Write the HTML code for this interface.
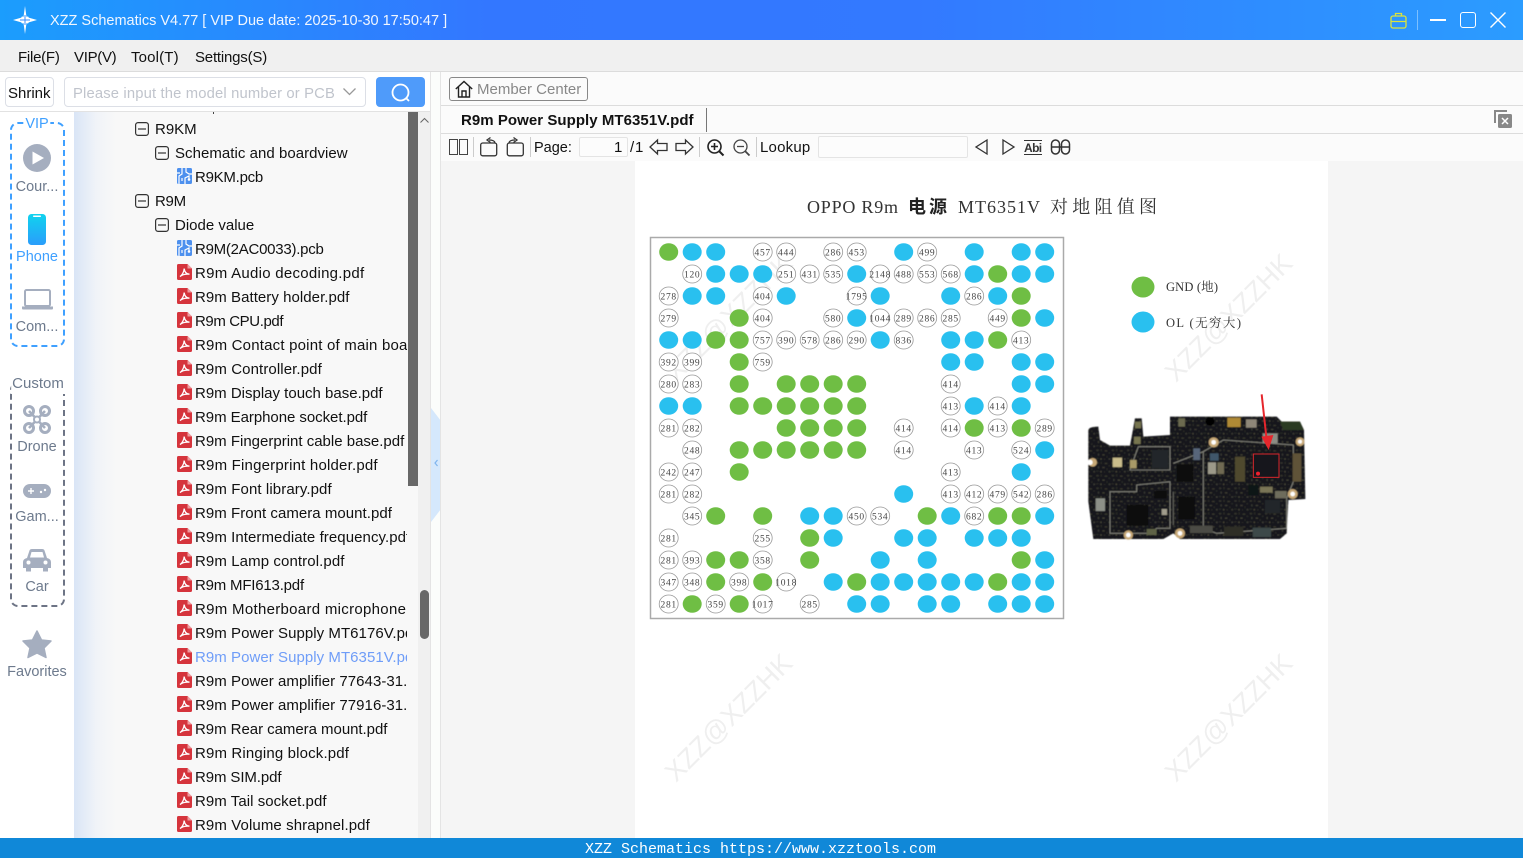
<!DOCTYPE html>
<html lang="en"><head><meta charset="utf-8"><title>XZZ Schematics</title>
<style>
*{box-sizing:border-box}
html,body{margin:0;padding:0;width:1523px;height:858px;overflow:hidden;background:#fff;font-family:"Liberation Sans","Noto Sans CJK SC",sans-serif;font-size:15px;color:#111}
.a{position:absolute}
.t{position:absolute;white-space:nowrap;line-height:20px;height:20px;margin-top:1px}
.c{text-align:center;transform:translateX(-50%)}
.r{color:#6d7a8d;font-size:14.5px}
#tree .t{color:#111}
svg{position:absolute;overflow:visible}
.num{font:9.5px "Liberation Serif",serif;letter-spacing:.7px;fill:#444;text-anchor:middle}
</style></head><body>
<svg width="0" height="0" style="left:0;top:0">
<defs>
<symbol id="pdf" viewBox="0 0 15 16"><path d="M1.5 0H10.5L15 4.5V14.5A1.5 1.5 0 0 1 13.500 16H1.500A1.500 1.500 0 0 1 0 14.500V1.500A1.500 1.500 0 0 1 1.500 0Z" fill="#d5343c"/><path d="M10.500 0L15 4.500H10.500Z" fill="#ef9a9e"/><path d="M3 12.500C5 11.500 7 8 7.200 4.500C7.500 8 9.500 10 12.500 10.200C9.500 10 5.500 10.500 3 12.500Z" fill="none" stroke="#fff" stroke-width="1.300"/></symbol>
<symbol id="pcb" viewBox="0 0 15 16"><rect width="15" height="16" rx="1.500" fill="#4d90ee"/><path d="M5 0V6L2 8V16M9 0V4L12 6H15M0 5H3M8 16V10L12 8V11M5 10V13" fill="none" stroke="#fff" stroke-width="1.200"/><circle cx="12" cy="11.500" r="1.300" fill="#fff"/></symbol>
<symbol id="minus" viewBox="0 0 14 14"><rect x=".6" y=".6" width="12.800" height="12.800" rx="2.500" fill="none" stroke="#333" stroke-width="1.200"/><path d="M3 7H11" stroke="#333" stroke-width="1.200"/></symbol>
</defs></svg>

<!-- title bar -->
<div class="a" style="left:0;top:0;width:1523px;height:40px;background:linear-gradient(90deg,#1b9dfd 0,#3377ff 32%,#3379ff 60%,#2b9cff 100%)"></div>
<svg style="left:13px;top:6px" width="24" height="28" viewBox="0 0 24 28"><path d="M12 0L13.500 11L24 14L13.500 17L12 28L10.500 17L0 14L10.500 11Z" fill="#fff"/><path d="M12 9V19M7 14H17" stroke="#3a8dfb" stroke-width="1"/><circle cx="9.500" cy="11.700" r="1.200" fill="#fff"/><circle cx="14.500" cy="11.700" r="1.200" fill="#fff"/><circle cx="9.500" cy="16.300" r="1.200" fill="#fff"/><circle cx="14.500" cy="16.300" r="1.200" fill="#fff"/></svg>
<div class="t" style="left:50px;top:10px;color:#f0f6ff;font-size:14.500px">XZZ Schematics V4.77 [ VIP Due date: 2025-10-30 17:50:47 ]</div>
<svg style="left:1390px;top:12px" width="17" height="17" viewBox="0 0 17 17" fill="none" stroke="#dbe33c" stroke-width="1.300"><rect x="1" y="4" width="15" height="12" rx="2"/><path d="M5.500 4V1.500H11.500V4M1 9.500H6M11 9.500H16M6 9.500H11"/></svg>
<div class="a" style="left:1417px;top:10px;width:1px;height:20px;background:#7cc0ff"></div>
<div class="a" style="left:1430px;top:19px;width:16px;height:2px;background:#fff"></div>
<div class="a" style="left:1460px;top:12px;width:16px;height:16px;border:1.500px solid #fff;border-radius:3px"></div>
<svg style="left:1490px;top:12px" width="16" height="16" viewBox="0 0 16 16"><path d="M.5 .5L15.500 15.500M15.500 .5L.5 15.500" stroke="#fff" stroke-width="1.400"/></svg>

<!-- menu -->
<div class="a" style="left:0;top:40px;width:1523px;height:32px;background:#f0f0f0;border-bottom:1px solid #dcdcdc"></div>
<div class="t" style="left:18px;top:47px;letter-spacing:-.25px">File(F)</div>
<div class="t" style="left:74px;top:47px;letter-spacing:-.3px">VIP(V)</div>
<div class="t" style="left:131px;top:47px;letter-spacing:.15px">Tool(T)</div>
<div class="t" style="left:195px;top:47px;letter-spacing:-.2px">Settings(S)</div>

<!-- left search row -->
<div class="a" style="left:0;top:72px;width:430px;height:40px;background:#fff;border-bottom:1px solid #e2e2e2"></div>
<div class="a" style="left:5px;top:77px;width:49px;height:30px;border:1px solid #dcdfe6;border-radius:4px"></div>
<div class="t" style="left:8px;top:83px">Shrink</div>
<div class="a" style="left:64px;top:77px;width:302px;height:30px;border:1px solid #dcdfe6;border-radius:4px"></div>
<div class="t" style="left:73px;top:83px;color:#c0c4cc;font-size:14.800px;letter-spacing:.15px">Please input the model number or PCB</div>
<svg style="left:343px;top:88px" width="13" height="8" viewBox="0 0 13 8"><path d="M.5 .5L6.500 6.500L12.500 .5" fill="none" stroke="#999" stroke-width="1.300"/></svg>
<div class="a" style="left:376px;top:77px;width:49px;height:30px;background:#4f9bfa;border-radius:4px"></div>
<svg style="left:391px;top:83px" width="20" height="20" viewBox="0 0 20 20"><circle cx="9.500" cy="9.500" r="8" fill="none" stroke="#fff" stroke-width="1.800"/><path d="M15 15L18 18" stroke="#fff" stroke-width="1.800"/></svg>

<!-- rail -->
<div class="a" style="left:0;top:112px;width:74px;height:726px;background:#fff"></div>
<div class="a" style="left:10px;top:122px;width:55px;height:225px;border:2px dashed #3fa0ff;border-radius:8px"></div>
<div class="t c" style="left:37px;top:113px;color:#3fa0ff;background:#fff;padding:0 2px;font-size:14.500px">VIP</div>
<svg style="left:23px;top:144px" width="28" height="28" viewBox="0 0 28 28"><circle cx="14" cy="14" r="14" fill="#a5aebf"/><path d="M9.500 7.500L21 14L9.500 20.500Z" fill="#fff"/></svg>
<div class="t c r" style="left:37px;top:176px">Cour...</div>
<svg style="left:28px;top:214px" width="18" height="31" viewBox="0 0 18 31"><defs><linearGradient id="ph" x1="0" x2="0" y1="0" y2="1"><stop offset="0" stop-color="#10d3ee"/><stop offset="1" stop-color="#2a9dfb"/></linearGradient></defs><rect width="18" height="31" rx="3.500" fill="url(#ph)"/><rect x="5" y="1.500" width="8" height="1.500" rx=".7" fill="#fff"/></svg>
<div class="t c" style="left:37px;top:246px;color:#3fa0ff;font-size:14.500px">Phone</div>
<svg style="left:22px;top:289px" width="31" height="21" viewBox="0 0 31 21"><rect x="3" y="1" width="25" height="16" rx="1.500" fill="none" stroke="#a5aebf" stroke-width="2"/><path d="M0 17.500H31V19.500A1 1 0 0 1 30 20.500H1A1 1 0 0 1 0 19.500Z" fill="#a5aebf"/></svg>
<div class="t c r" style="left:37px;top:316px">Com...</div>

<div class="a" style="left:10px;top:382px;width:55px;height:225px;border:2px dashed #6d7485;border-radius:8px"></div>
<div class="t c" style="left:38px;top:373px;color:#6d7a8d;background:#fff;padding:0 1px;font-size:15px">Custom</div>
<svg style="left:23px;top:405px" width="28" height="29" viewBox="0 0 28 29" fill="none" stroke="#a5aebf"><path d="M6 6L22 23M22 6L6 23" stroke-width="2.500"/><circle cx="6" cy="6" r="4.500" stroke-width="3"/><circle cx="22" cy="6" r="4.500" stroke-width="3"/><circle cx="6" cy="23" r="4.500" stroke-width="3"/><circle cx="22" cy="23" r="4.500" stroke-width="3"/><circle cx="14" cy="14.500" r="3" fill="#fff" stroke-width="2"/></svg>
<div class="t c r" style="left:37px;top:436px">Drone</div>
<svg style="left:23px;top:484px" width="28" height="14" viewBox="0 0 28 14"><rect width="28" height="14" rx="7" fill="#a5aebf"/><path d="M5 7H11M8 4V10" stroke="#fff" stroke-width="1.400"/><circle cx="18" cy="8" r="1.200" fill="#fff"/><circle cx="22" cy="6" r="1.200" fill="#fff"/></svg>
<div class="t c r" style="left:37px;top:506px">Gam...</div>
<svg style="left:23px;top:548px" width="28" height="24" viewBox="0 0 28 24"><path d="M4 10L6.500 2.500Q7 1 9 1H19Q21 1 21.500 2.500L24 10Q28 11 28 14V20H25V23.500H20V20H8V23.500H3V20H0V14Q0 11 4 10Z" fill="#a5aebf"/><path d="M7 9.500L8.500 4H19.500L21 9.500Z" fill="#fff"/><circle cx="5.500" cy="14.500" r="2" fill="#fff"/><circle cx="22.500" cy="14.500" r="2" fill="#fff"/></svg>
<div class="t c r" style="left:37px;top:576px">Car</div>
<svg style="left:22px;top:630px" width="30" height="28" viewBox="0 0 30 28"><path d="M15 1L19.500 10L29 11L22 18L24 27.500L15 23L6 27.500L8 18L1 11L10.500 10Z" fill="#a5aebf" stroke="#a5aebf" stroke-width="1.500" stroke-linejoin="round"/></svg>
<div class="t c r" style="left:37px;top:661px">Favorites</div>

<!-- tree -->
<div class="a" style="left:74px;top:112px;width:334px;height:726px;background:linear-gradient(90deg,#d9e5f6 0,#f0f3f8 22px,#f8f8f8 42px)"></div>
<div class="a" style="left:213px;top:112px;width:1px;height:2px;background:#444"></div>
<div class="a" style="left:408px;top:112px;width:10px;height:374px;background:#686868"></div>
<div class="a" style="left:408px;top:486px;width:10px;height:352px;background:#f8f8f8"></div>
<div class="a" style="left:418px;top:112px;width:12px;height:726px;background:#f0f0f0"></div>
<svg style="left:420px;top:117px" width="9" height="6" viewBox="0 0 9 6"><path d="M.5 5.500L4.500 1.500L8.500 5.500" fill="none" stroke="#666"/></svg>
<div class="a" style="left:420px;top:590px;width:9px;height:49px;background:#686868;border-radius:4.500px"></div>
<div id="tree" class="a" style="left:74px;top:112px;width:333px;height:726px;overflow:hidden">
<svg style="left:61px;top:9.500px" width="14" height="14"><use href="#minus"/></svg><div class="t" style="left:81px;top:7px">R9KM</div>
<svg style="left:81px;top:33.500px" width="14" height="14"><use href="#minus"/></svg><div class="t" style="left:101px;top:31px;letter-spacing:.04px">Schematic and boardview</div>
<svg style="left:103px;top:56px" width="15" height="16"><use href="#pcb"/></svg><div class="t" style="left:121px;top:55px;letter-spacing:-.25px">R9KM.pcb</div>
<svg style="left:61px;top:81.500px" width="14" height="14"><use href="#minus"/></svg><div class="t" style="left:81px;top:79px;letter-spacing:-.3px">R9M</div>
<svg style="left:81px;top:105.500px" width="14" height="14"><use href="#minus"/></svg><div class="t" style="left:101px;top:103px">Diode value</div>
<svg style="left:103px;top:128px" width="15" height="16"><use href="#pcb"/></svg><div class="t" style="left:121px;top:127px;letter-spacing:-.25px">R9M(2AC0033).pcb</div>
<svg style="left:103px;top:152px" width="15" height="16"><use href="#pdf"/></svg><div class="t" style="left:121px;top:151px;letter-spacing:.27px">R9m Audio decoding.pdf</div>
<svg style="left:103px;top:176px" width="15" height="16"><use href="#pdf"/></svg><div class="t" style="left:121px;top:175px;letter-spacing:.05px">R9m Battery holder.pdf</div>
<svg style="left:103px;top:200px" width="15" height="16"><use href="#pdf"/></svg><div class="t" style="left:121px;top:199px;letter-spacing:-.4px">R9m CPU.pdf</div>
<svg style="left:103px;top:224px" width="15" height="16"><use href="#pdf"/></svg><div class="t" style="left:121px;top:223px;letter-spacing:.2px">R9m Contact point of main board.pdf</div>
<svg style="left:103px;top:248px" width="15" height="16"><use href="#pdf"/></svg><div class="t" style="left:121px;top:247px;letter-spacing:.1px">R9m Controller.pdf</div>
<svg style="left:103px;top:272px" width="15" height="16"><use href="#pdf"/></svg><div class="t" style="left:121px;top:271px">R9m Display touch base.pdf</div>
<svg style="left:103px;top:296px" width="15" height="16"><use href="#pdf"/></svg><div class="t" style="left:121px;top:295px;letter-spacing:-.05px">R9m Earphone socket.pdf</div>
<svg style="left:103px;top:320px" width="15" height="16"><use href="#pdf"/></svg><div class="t" style="left:121px;top:319px">R9m Fingerprint cable base.pdf</div>
<svg style="left:103px;top:344px" width="15" height="16"><use href="#pdf"/></svg><div class="t" style="left:121px;top:343px;letter-spacing:.2px">R9m Fingerprint holder.pdf</div>
<svg style="left:103px;top:368px" width="15" height="16"><use href="#pdf"/></svg><div class="t" style="left:121px;top:367px;letter-spacing:.1px">R9m Font library.pdf</div>
<svg style="left:103px;top:392px" width="15" height="16"><use href="#pdf"/></svg><div class="t" style="left:121px;top:391px;letter-spacing:.04px">R9m Front camera mount.pdf</div>
<svg style="left:103px;top:416px" width="15" height="16"><use href="#pdf"/></svg><div class="t" style="left:121px;top:415px;letter-spacing:.07px">R9m Intermediate frequency.pdf</div>
<svg style="left:103px;top:440px" width="15" height="16"><use href="#pdf"/></svg><div class="t" style="left:121px;top:439px;letter-spacing:.1px">R9m Lamp control.pdf</div>
<svg style="left:103px;top:464px" width="15" height="16"><use href="#pdf"/></svg><div class="t" style="left:121px;top:463px;letter-spacing:-.2px">R9m MFI613.pdf</div>
<svg style="left:103px;top:488px" width="15" height="16"><use href="#pdf"/></svg><div class="t" style="left:121px;top:487px;letter-spacing:.3px">R9m Motherboard microphone.pdf</div>
<svg style="left:103px;top:512px" width="15" height="16"><use href="#pdf"/></svg><div class="t" style="left:121px;top:511px;letter-spacing:.05px">R9m Power Supply MT6176V.pdf</div>
<svg style="left:103px;top:536px" width="15" height="16"><use href="#pdf"/></svg><div class="t" style="left:121px;top:535px;color:#6f9df8;letter-spacing:.05px">R9m Power Supply MT6351V.pdf</div>
<svg style="left:103px;top:560px" width="15" height="16"><use href="#pdf"/></svg><div class="t" style="left:121px;top:559px;letter-spacing:.05px">R9m Power amplifier 77643-31.pdf</div>
<svg style="left:103px;top:584px" width="15" height="16"><use href="#pdf"/></svg><div class="t" style="left:121px;top:583px;letter-spacing:.05px">R9m Power amplifier 77916-31.pdf</div>
<svg style="left:103px;top:608px" width="15" height="16"><use href="#pdf"/></svg><div class="t" style="left:121px;top:607px;letter-spacing:-.04px">R9m Rear camera mount.pdf</div>
<svg style="left:103px;top:632px" width="15" height="16"><use href="#pdf"/></svg><div class="t" style="left:121px;top:631px;letter-spacing:.15px">R9m Ringing block.pdf</div>
<svg style="left:103px;top:656px" width="15" height="16"><use href="#pdf"/></svg><div class="t" style="left:121px;top:655px;letter-spacing:-.1px">R9m SIM.pdf</div>
<svg style="left:103px;top:680px" width="15" height="16"><use href="#pdf"/></svg><div class="t" style="left:121px;top:679px;letter-spacing:.05px">R9m Tail socket.pdf</div>
<svg style="left:103px;top:704px" width="15" height="16"><use href="#pdf"/></svg><div class="t" style="left:121px;top:703px;letter-spacing:.1px">R9m Volume shrapnel.pdf</div>
</div>

<!-- right area -->
<div class="a" style="left:430px;top:72px;width:1093px;height:766px;background:#fbfbfb;border-left:1px solid #e4e4e4"></div>
<div class="a" style="left:431px;top:72px;width:10px;height:766px;background:#fbfdfb"></div>
<svg style="left:431px;top:408px" width="10" height="114" viewBox="0 0 10 114"><path d="M0 0L10 13V101L0 114Z" fill="#d5e8fc"/><path d="M6.500 52L4 55L6.500 58" fill="none" stroke="#7fb5ee" stroke-width="1.200"/></svg>
<div class="a" style="left:440px;top:72px;width:1px;height:766px;background:#e4e4e4"></div>
<div class="a" style="left:441px;top:105px;width:1082px;height:1px;background:#dcdcdc"></div>
<div class="a" style="left:441px;top:133px;width:1082px;height:1px;background:#dcdcdc"></div>

<div class="a" style="left:449px;top:77px;width:139px;height:24px;border:1px solid #888;border-radius:3px"></div>
<svg style="left:455px;top:80px" width="18" height="18" viewBox="0 0 18 18" fill="none" stroke="#222" stroke-width="1.400"><path d="M.8 9L9 1.500L17.200 9M3.500 7V17H14.500V7M7 17V11H11V17"/></svg>
<div class="t" style="left:477px;top:79px;color:#888;font-size:15px">Member Center</div>

<div class="t" style="left:461px;top:110px;font-weight:bold;font-size:15px;letter-spacing:.05px">R9m Power Supply MT6351V.pdf</div>
<div class="a" style="left:706px;top:108px;width:1px;height:24px;background:#777"></div>
<svg style="left:1494px;top:110px" width="18" height="18" viewBox="0 0 18 18"><path d="M1 13V1H13" fill="none" stroke="#888" stroke-width="2"/><rect x="4" y="4" width="14" height="14" rx="1.500" fill="#888"/><path d="M8 8L14 14M14 8L8 14" stroke="#fff" stroke-width="1.500"/></svg>

<!-- toolbar -->
<svg style="left:449px;top:138px" width="19" height="18" viewBox="0 0 19 18" fill="none" stroke="#444"><rect x=".5" y="1.500" width="8" height="15"/><rect x="10.500" y="1.500" width="8" height="15"/></svg>
<div class="a" style="left:473px;top:137px;width:1px;height:20px;background:#ccc"></div>
<svg style="left:480px;top:137px" width="18" height="20" viewBox="0 0 18 20" fill="none" stroke="#333" stroke-width="1.300"><rect x=".7" y="6" width="16" height="12.800" rx="2"/><path d="M15 5.500Q14 3 9 3M10.500 .5L7 3L10.500 5.500"/></svg>
<svg style="left:506px;top:137px" width="18" height="20" viewBox="0 0 18 20" fill="none" stroke="#333" stroke-width="1.300"><rect x="1.300" y="6" width="16" height="12.800" rx="2"/><path d="M3 5.500Q4 3 9 3M7.500 .5L11 3L7.500 5.500"/></svg>
<div class="a" style="left:530px;top:137px;width:1px;height:20px;background:#ccc"></div>
<div class="t" style="left:534px;top:137px;font-size:14.500px">Page:</div>
<div class="a" style="left:579px;top:137px;width:49px;height:20px;border:1px solid #e4e4e4;border-radius:2px;background:#fcfcfc"></div>
<div class="t" style="left:614px;top:137px">1</div>
<div class="t" style="left:630px;top:137px;letter-spacing:.8px">/1</div>
<svg style="left:649px;top:139px" width="19" height="16" viewBox="0 0 19 16"><path d="M18 4.500H8.500V1L1 8L8.500 15V11.500H18Z" fill="none" stroke="#333" stroke-width="1.300"/></svg>
<svg style="left:675px;top:139px" width="19" height="16" viewBox="0 0 19 16"><path d="M1 4.500H10.500V1L18 8L10.500 15V11.500H1Z" fill="none" stroke="#333" stroke-width="1.300"/></svg>
<div class="a" style="left:699px;top:137px;width:1px;height:20px;background:#ccc"></div>
<svg style="left:707px;top:139px" width="17" height="17" viewBox="0 0 17 17" fill="none" stroke="#222" stroke-width="1.600"><circle cx="7.500" cy="7.500" r="6.500"/><path d="M12 12L16.500 16.500" stroke-width="2"/><path d="M4 7.500H11M7.500 4V11"/></svg>
<svg style="left:733px;top:139px" width="17" height="17" viewBox="0 0 17 17" fill="none" stroke="#444" stroke-width="1.300"><circle cx="7.500" cy="7.500" r="6.500"/><path d="M12 12L16.500 16.500" stroke-width="1.800"/><path d="M4 7.500H11"/></svg>
<div class="a" style="left:756px;top:137px;width:1px;height:20px;background:#ccc"></div>
<div class="t" style="left:760px;top:137px;font-size:15px;letter-spacing:.2px">Lookup</div>
<div class="a" style="left:818px;top:136px;width:150px;height:22px;border:1px solid #e4e4e4;border-radius:2px;background:#fcfcfc"></div>
<svg style="left:975px;top:139px" width="13" height="16" viewBox="0 0 13 16"><path d="M12 1L1 8L12 15Z" fill="none" stroke="#333" stroke-width="1.300"/></svg>
<svg style="left:1002px;top:139px" width="13" height="16" viewBox="0 0 13 16"><path d="M1 1L12 8L1 15Z" fill="none" stroke="#333" stroke-width="1.300"/></svg>
<div class="t" style="left:1024px;top:137px;font-size:12px;font-weight:bold;color:#333;letter-spacing:-.6px;border-top:1px solid #333;border-bottom:1px solid #333;height:15px;line-height:14px;margin-top:3px">Abi</div>
<svg style="left:1050px;top:139px" width="21" height="16" viewBox="0 0 21 16" fill="none" stroke="#333" stroke-width="1.500"><rect x="1.500" y="1" width="8" height="14" rx="4"/><rect x="11.500" y="1" width="8" height="14" rx="4"/><path d="M1.500 8H19.500"/></svg>

<!-- pdf viewer -->
<div class="a" style="left:441px;top:161px;width:1082px;height:677px;background:#f5f5f5"></div>
<div class="a" style="left:635px;top:161px;width:693px;height:677px;background:#fff"></div>

<svg style="left:0;top:0" width="1523" height="858" viewBox="0 0 1523 858">
<defs>
<ellipse id="g" rx="9.500" ry="8.800" fill="#6fbe44"/>
<ellipse id="b" rx="9.500" ry="8.800" fill="#29c0ef"/>
<ellipse id="n" rx="9.500" ry="9" fill="#fff" stroke="#999" stroke-width=".8"/>
<filter id="bl" x="-5%" y="-5%" width="110%" height="110%"><feGaussianBlur stdDeviation="1.500"/></filter>
<pattern id="sp" width="46" height="38" patternUnits="userSpaceOnUse"><rect width="46" height="38" fill="#18191a"/><rect x="3" y="4" width="7" height="4" fill="#3a3a30"/><rect x="16" y="2" width="4" height="7" fill="#2a2b27"/><rect x="28" y="6" width="8" height="3" fill="#424033"/><rect x="40" y="12" width="4" height="4" fill="#2e2f2b"/><rect x="8" y="16" width="3" height="6" fill="#46463c"/><rect x="21" y="18" width="7" height="3" fill="#4e4c3c"/><rect x="33" y="22" width="4" height="6" fill="#262724"/><rect x="2" y="29" width="8" height="3" fill="#2a2b27"/><rect x="15" y="30" width="4" height="4" fill="#55523f"/><rect x="26" y="31" width="3" height="3" fill="#383730"/><rect x="40" y="30" width="5" height="4" fill="#44433a"/></pattern>
</defs>
<!-- watermarks -->
<g font-family="Liberation Sans,sans-serif" font-size="27" fill="#efefef">
<text transform="translate(676,783) rotate(-45)">XZZ@XZZHK</text>
<text transform="translate(1176,783) rotate(-45)">XZZ@XZZHK</text>
<text transform="translate(676,383) rotate(-45)">XZZ@XZZHK</text>
<text transform="translate(1176,383) rotate(-45)">XZZ@XZZHK</text>
</g>
<g font-family="Liberation Serif,Noto Serif CJK SC,serif" font-size="18" fill="#333">
<text x="807" y="213" textLength="91" lengthAdjust="spacing">OPPO R9m</text>
<text x="908" y="213" textLength="39" lengthAdjust="spacing" font-family="Noto Sans CJK SC,sans-serif" font-weight="bold" fill="#222">电源</text>
<text x="958" y="213" textLength="82" lengthAdjust="spacing">MT6351V</text>
<text x="1050" y="213" textLength="107" lengthAdjust="spacing">对地阻值图</text>
</g>
<rect x="650.500" y="237.500" width="413" height="381" fill="none" stroke="#aaa" stroke-width="1.500"/>
<ellipse cx="1143" cy="287" rx="11.500" ry="10.500" fill="#6fbe44"/>
<ellipse cx="1143" cy="322" rx="11.500" ry="10.500" fill="#29c0ef"/>
<text x="1166" y="291" font-family="Liberation Serif,Noto Serif CJK SC,serif" font-size="12.500" textLength="52" lengthAdjust="spacing" fill="#333">GND (地)</text>
<text x="1166" y="327" font-family="Liberation Serif,Noto Serif CJK SC,serif" font-size="12.500" textLength="75" lengthAdjust="spacing" fill="#333">OL (无穷大)</text>

<!-- R1 -->
<use href="#g" x="668.700" y="252"/><use href="#b" x="692.200" y="252"/><use href="#b" x="715.700" y="252"/>
<use href="#n" x="762.700" y="252"/><use href="#n" x="786.200" y="252"/><use href="#n" x="833.200" y="252"/><use href="#n" x="856.700" y="252"/>
<use href="#b" x="903.700" y="252"/><use href="#n" x="927.200" y="252"/><use href="#b" x="974.200" y="252"/><use href="#b" x="1021.200" y="252"/><use href="#b" x="1044.700" y="252"/>
<text class="num" x="762.700" y="255.500">457</text><text class="num" x="786.200" y="255.500">444</text><text class="num" x="833.200" y="255.500">286</text><text class="num" x="856.700" y="255.500">453</text><text class="num" x="927.200" y="255.500">499</text>
<!-- R2 -->
<use href="#n" x="692.200" y="274"/><use href="#b" x="715.700" y="274"/><use href="#b" x="739.200" y="274"/><use href="#b" x="762.700" y="274"/><use href="#n" x="786.200" y="274"/><use href="#n" x="809.700" y="274"/><use href="#n" x="833.200" y="274"/><use href="#b" x="856.700" y="274"/><use href="#n" x="880.200" y="274"/><use href="#n" x="903.700" y="274"/><use href="#n" x="927.200" y="274"/><use href="#n" x="950.700" y="274"/><use href="#b" x="974.200" y="274"/><use href="#g" x="997.700" y="274"/><use href="#b" x="1021.200" y="274"/><use href="#b" x="1044.700" y="274"/>
<text class="num" x="692.200" y="277.500">120</text><text class="num" x="786.200" y="277.500">251</text><text class="num" x="809.700" y="277.500">431</text><text class="num" x="833.200" y="277.500">535</text><text class="num" x="880.200" y="277.500">2148</text><text class="num" x="903.700" y="277.500">488</text><text class="num" x="927.200" y="277.500">553</text><text class="num" x="950.700" y="277.500">568</text>
<!-- R3 -->
<use href="#n" x="668.700" y="296"/><use href="#b" x="692.200" y="296"/><use href="#b" x="715.700" y="296"/><use href="#n" x="762.700" y="296"/><use href="#b" x="786.200" y="296"/><use href="#n" x="856.700" y="296"/><use href="#b" x="880.200" y="296"/><use href="#b" x="950.700" y="296"/><use href="#n" x="974.200" y="296"/><use href="#b" x="997.700" y="296"/><use href="#g" x="1021.200" y="296"/>
<text class="num" x="668.700" y="299.500">278</text><text class="num" x="762.700" y="299.500">404</text><text class="num" x="856.700" y="299.500">1795</text><text class="num" x="974.200" y="299.500">286</text>
<!-- R4 -->
<use href="#n" x="668.700" y="318"/><use href="#g" x="739.200" y="318"/><use href="#n" x="762.700" y="318"/><use href="#n" x="833.200" y="318"/><use href="#b" x="856.700" y="318"/><use href="#n" x="880.200" y="318"/><use href="#n" x="903.700" y="318"/><use href="#n" x="927.200" y="318"/><use href="#n" x="950.700" y="318"/><use href="#n" x="997.700" y="318"/><use href="#g" x="1021.200" y="318"/><use href="#b" x="1044.700" y="318"/>
<text class="num" x="668.700" y="321.500">279</text><text class="num" x="762.700" y="321.500">404</text><text class="num" x="833.200" y="321.500">580</text><text class="num" x="880.200" y="321.500">1044</text><text class="num" x="903.700" y="321.500">289</text><text class="num" x="927.200" y="321.500">286</text><text class="num" x="950.700" y="321.500">285</text><text class="num" x="997.700" y="321.500">449</text>
<!-- R5 -->
<use href="#b" x="668.700" y="340"/><use href="#b" x="692.200" y="340"/><use href="#g" x="715.700" y="340"/><use href="#g" x="739.200" y="340"/><use href="#n" x="762.700" y="340"/><use href="#n" x="786.200" y="340"/><use href="#n" x="809.700" y="340"/><use href="#n" x="833.200" y="340"/><use href="#n" x="856.700" y="340"/><use href="#b" x="880.200" y="340"/><use href="#n" x="903.700" y="340"/><use href="#b" x="950.700" y="340"/><use href="#b" x="974.200" y="340"/><use href="#g" x="997.700" y="340"/><use href="#n" x="1021.200" y="340"/>
<text class="num" x="762.700" y="343.500">757</text><text class="num" x="786.200" y="343.500">390</text><text class="num" x="809.700" y="343.500">578</text><text class="num" x="833.200" y="343.500">286</text><text class="num" x="856.700" y="343.500">290</text><text class="num" x="903.700" y="343.500">836</text><text class="num" x="1021.200" y="343.500">413</text>
<!-- R6 -->
<use href="#n" x="668.700" y="362"/><use href="#n" x="692.200" y="362"/><use href="#g" x="739.200" y="362"/><use href="#n" x="762.700" y="362"/><use href="#b" x="950.700" y="362"/><use href="#b" x="974.200" y="362"/><use href="#b" x="1021.200" y="362"/><use href="#b" x="1044.700" y="362"/>
<text class="num" x="668.700" y="365.500">392</text><text class="num" x="692.200" y="365.500">399</text><text class="num" x="762.700" y="365.500">759</text>
<!-- R7 -->
<use href="#n" x="668.700" y="384"/><use href="#n" x="692.200" y="384"/><use href="#g" x="739.200" y="384"/><use href="#g" x="786.200" y="384"/><use href="#g" x="809.700" y="384"/><use href="#g" x="833.200" y="384"/><use href="#g" x="856.700" y="384"/><use href="#n" x="950.700" y="384"/><use href="#b" x="1021.200" y="384"/><use href="#b" x="1044.700" y="384"/>
<text class="num" x="668.700" y="387.500">280</text><text class="num" x="692.200" y="387.500">283</text><text class="num" x="950.700" y="387.500">414</text>
<!-- R8 -->
<use href="#b" x="668.700" y="406"/><use href="#b" x="692.200" y="406"/><use href="#g" x="739.200" y="406"/><use href="#g" x="762.700" y="406"/><use href="#g" x="786.200" y="406"/><use href="#g" x="809.700" y="406"/><use href="#g" x="833.200" y="406"/><use href="#g" x="856.700" y="406"/><use href="#n" x="950.700" y="406"/><use href="#b" x="974.200" y="406"/><use href="#n" x="997.700" y="406"/><use href="#b" x="1021.200" y="406"/>
<text class="num" x="950.700" y="409.500">413</text><text class="num" x="997.700" y="409.500">414</text>
<!-- R9 -->
<use href="#n" x="668.700" y="428"/><use href="#n" x="692.200" y="428"/><use href="#g" x="786.200" y="428"/><use href="#g" x="809.700" y="428"/><use href="#g" x="833.200" y="428"/><use href="#g" x="856.700" y="428"/><use href="#n" x="903.700" y="428"/><use href="#n" x="950.700" y="428"/><use href="#g" x="974.200" y="428"/><use href="#n" x="997.700" y="428"/><use href="#g" x="1021.200" y="428"/><use href="#n" x="1044.700" y="428"/>
<text class="num" x="668.700" y="431.500">281</text><text class="num" x="692.200" y="431.500">282</text><text class="num" x="903.700" y="431.500">414</text><text class="num" x="950.700" y="431.500">414</text><text class="num" x="997.700" y="431.500">413</text><text class="num" x="1044.700" y="431.500">289</text>
<!-- R10 -->
<use href="#n" x="692.200" y="450"/><use href="#g" x="739.200" y="450"/><use href="#g" x="762.700" y="450"/><use href="#g" x="786.200" y="450"/><use href="#g" x="809.700" y="450"/><use href="#g" x="833.200" y="450"/><use href="#g" x="856.700" y="450"/><use href="#n" x="903.700" y="450"/><use href="#n" x="974.200" y="450"/><use href="#n" x="1021.200" y="450"/><use href="#b" x="1044.700" y="450"/>
<text class="num" x="692.200" y="453.500">248</text><text class="num" x="903.700" y="453.500">414</text><text class="num" x="974.200" y="453.500">413</text><text class="num" x="1021.200" y="453.500">524</text>
<!-- R11 -->
<use href="#n" x="668.700" y="472"/><use href="#n" x="692.200" y="472"/><use href="#g" x="739.200" y="472"/><use href="#n" x="950.700" y="472"/><use href="#b" x="1021.200" y="472"/>
<text class="num" x="668.700" y="475.500">242</text><text class="num" x="692.200" y="475.500">247</text><text class="num" x="950.700" y="475.500">413</text>
<!-- R12 -->
<use href="#n" x="668.700" y="494"/><use href="#n" x="692.200" y="494"/><use href="#b" x="903.700" y="494"/><use href="#n" x="950.700" y="494"/><use href="#n" x="974.200" y="494"/><use href="#n" x="997.700" y="494"/><use href="#n" x="1021.200" y="494"/><use href="#n" x="1044.700" y="494"/>
<text class="num" x="668.700" y="497.500">281</text><text class="num" x="692.200" y="497.500">282</text><text class="num" x="950.700" y="497.500">413</text><text class="num" x="974.200" y="497.500">412</text><text class="num" x="997.700" y="497.500">479</text><text class="num" x="1021.200" y="497.500">542</text><text class="num" x="1044.700" y="497.500">286</text>
<!-- R13 -->
<use href="#n" x="692.200" y="516"/><use href="#g" x="715.700" y="516"/><use href="#g" x="762.700" y="516"/><use href="#b" x="809.700" y="516"/><use href="#b" x="833.200" y="516"/><use href="#n" x="856.700" y="516"/><use href="#n" x="880.200" y="516"/><use href="#g" x="927.200" y="516"/><use href="#b" x="950.700" y="516"/><use href="#n" x="974.200" y="516"/><use href="#g" x="997.700" y="516"/><use href="#g" x="1021.200" y="516"/><use href="#b" x="1044.700" y="516"/>
<text class="num" x="692.200" y="519.500">345</text><text class="num" x="856.700" y="519.500">450</text><text class="num" x="880.200" y="519.500">534</text><text class="num" x="974.200" y="519.500">682</text>
<!-- R14 -->
<use href="#n" x="668.700" y="538"/><use href="#n" x="762.700" y="538"/><use href="#g" x="809.700" y="538"/><use href="#b" x="833.200" y="538"/><use href="#b" x="903.700" y="538"/><use href="#b" x="927.200" y="538"/><use href="#b" x="974.200" y="538"/><use href="#b" x="997.700" y="538"/><use href="#b" x="1021.200" y="538"/>
<text class="num" x="668.700" y="541.500">281</text><text class="num" x="762.700" y="541.500">255</text>
<!-- R15 -->
<use href="#n" x="668.700" y="560"/><use href="#n" x="692.200" y="560"/><use href="#g" x="715.700" y="560"/><use href="#g" x="739.200" y="560"/><use href="#n" x="762.700" y="560"/><use href="#g" x="809.700" y="560"/><use href="#b" x="880.200" y="560"/><use href="#b" x="927.200" y="560"/><use href="#g" x="1021.200" y="560"/><use href="#b" x="1044.700" y="560"/>
<text class="num" x="668.700" y="563.500">281</text><text class="num" x="692.200" y="563.500">393</text><text class="num" x="762.700" y="563.500">358</text>
<!-- R16 -->
<use href="#n" x="668.700" y="582"/><use href="#n" x="692.200" y="582"/><use href="#g" x="715.700" y="582"/><use href="#n" x="739.200" y="582"/><use href="#g" x="762.700" y="582"/><use href="#n" x="786.200" y="582"/><use href="#b" x="833.200" y="582"/><use href="#g" x="856.700" y="582"/><use href="#b" x="880.200" y="582"/><use href="#b" x="903.700" y="582"/><use href="#b" x="927.200" y="582"/><use href="#b" x="950.700" y="582"/><use href="#b" x="974.200" y="582"/><use href="#g" x="997.700" y="582"/><use href="#b" x="1021.200" y="582"/><use href="#b" x="1044.700" y="582"/>
<text class="num" x="668.700" y="585.500">347</text><text class="num" x="692.200" y="585.500">348</text><text class="num" x="739.200" y="585.500">398</text><text class="num" x="786.200" y="585.500">1018</text>
<!-- R17 -->
<use href="#n" x="668.700" y="604"/><use href="#g" x="692.200" y="604"/><use href="#n" x="715.700" y="604"/><use href="#g" x="739.200" y="604"/><use href="#n" x="762.700" y="604"/><use href="#n" x="809.700" y="604"/><use href="#b" x="856.700" y="604"/><use href="#b" x="880.200" y="604"/><use href="#b" x="927.200" y="604"/><use href="#b" x="950.700" y="604"/><use href="#b" x="997.700" y="604"/><use href="#b" x="1021.200" y="604"/><use href="#b" x="1044.700" y="604"/>
<text class="num" x="668.700" y="607.500">281</text><text class="num" x="715.700" y="607.500">359</text><text class="num" x="762.700" y="607.500">1017</text><text class="num" x="809.700" y="607.500">285</text>

<!-- PCB -->
<g transform="translate(1080 385) scale(.33333)">
<g filter="url(#bl)">
<path d="M25 135Q28 125 55 125L60 165L90 182L150 182L165 100H185L190 155L270 150V95H590L605 110H660L672 135L676 342L625 345L620 445L600 462H300L280 445L250 462H40L25 350Z" fill="url(#sp)"/>
<path d="M175 185H270V255H150ZM90 320H170V300L270 290V430H230L210 445H90ZM280 235L370 200L430 165L640 180V290L620 340V430L410 445L370 430V200Z" fill="none" stroke="#8f8f86" stroke-width="2.500"/>
<path d="M280 320V420" fill="none" stroke="#77776f" stroke-width="2"/>
<rect x="215" y="195" width="50" height="55" fill="#23282b"/><rect x="290" y="238" width="50" height="52" fill="#0f1011"/><rect x="295" y="335" width="50" height="68" fill="#0d0e10"/><rect x="140" y="360" width="65" height="62" fill="#0d0e10"/><rect x="222" y="318" width="38" height="22" fill="#0c0d0d"/><rect x="555" y="345" width="45" height="40" fill="#24282a"/><rect x="505" y="300" width="30" height="30" fill="#101214"/>
<rect x="442" y="98" width="40" height="28" fill="#b08a35"/><rect x="498" y="103" width="32" height="25" fill="#8f8778"/><rect x="548" y="145" width="45" height="30" fill="#8c8c84"/>
<rect x="98" y="218" width="28" height="28" fill="#c9bc8b"/><rect x="47" y="340" width="28" height="38" fill="#8d9088"/><rect x="638" y="205" width="26" height="85" fill="#5e5238"/><rect x="330" y="422" width="68" height="22" fill="#4c4c45"/><rect x="432" y="425" width="58" height="28" fill="#2f2f28"/><rect x="518" y="428" width="55" height="28" fill="#3e4848"/><rect x="384" y="232" width="24" height="35" fill="#9c9989"/><rect x="412" y="232" width="20" height="35" fill="#6f6b52"/><rect x="390" y="205" width="26" height="22" fill="#41576b"/><rect x="465" y="215" width="30" height="75" fill="#4f482f"/><rect x="245" y="372" width="16" height="18" fill="#a09c8c"/><rect x="200" y="432" width="30" height="18" fill="#5f6347"/><rect x="150" y="225" width="20" height="25" fill="#a99a68"/><rect x="340" y="190" width="20" height="35" fill="#58667a"/><rect x="540" y="305" width="38" height="18" fill="#7a7556"/><rect x="585" y="318" width="35" height="22" fill="#6e6c5c"/>
<rect x="165" y="110" width="18" height="20" fill="#77744f"/><rect x="162" y="155" width="20" height="22" fill="#77744f"/><rect x="295" y="100" width="20" height="25" fill="#6c6a50"/>
<circle cx="390" cy="109" r="13" fill="#000"/><circle cx="401" cy="172" r="15" fill="#c7a876"/><circle cx="401" cy="172" r="7" fill="#fff"/><circle cx="638" cy="327" r="15" fill="#c7a876"/><circle cx="638" cy="327" r="7" fill="#fff"/><circle cx="300" cy="445" r="15" fill="#c7a876"/><circle cx="300" cy="445" r="7" fill="#fff"/><circle cx="145" cy="450" r="14" fill="#c7a876"/><circle cx="145" cy="450" r="7" fill="#fff"/><circle cx="660" cy="170" r="13" fill="#c7a876"/><circle cx="660" cy="170" r="6" fill="#fff"/><circle cx="38" cy="232" r="13" fill="#c7a876"/><circle cx="30" cy="232" r="8" fill="#fff"/>
<path d="M600 110H660L670 135H610Z" fill="#2b3a22"/>
<rect x="520" y="207" width="77" height="70" fill="#17181a"/>
</g>
<rect x="520" y="207" width="77" height="70" fill="none" stroke="#d8272c" stroke-width="3"/>
<circle cx="534" cy="266" r="6" fill="#ef1f2d"/>
<path d="M545 28L560 165" stroke="#e5262c" stroke-width="6" fill="none"/>
<path d="M544 155L580 150L566 195Z" fill="#e5262c"/>
</g>
</svg>

<!-- footer -->
<div class="a" style="left:0;top:838px;width:1523px;height:20px;background:#1088d8"></div>
<div class="t" style="left:585px;top:839px;color:#fff;font:15px/20px 'Liberation Mono',monospace">XZZ Schematics https://www.xzztools.com</div>
</body></html>
